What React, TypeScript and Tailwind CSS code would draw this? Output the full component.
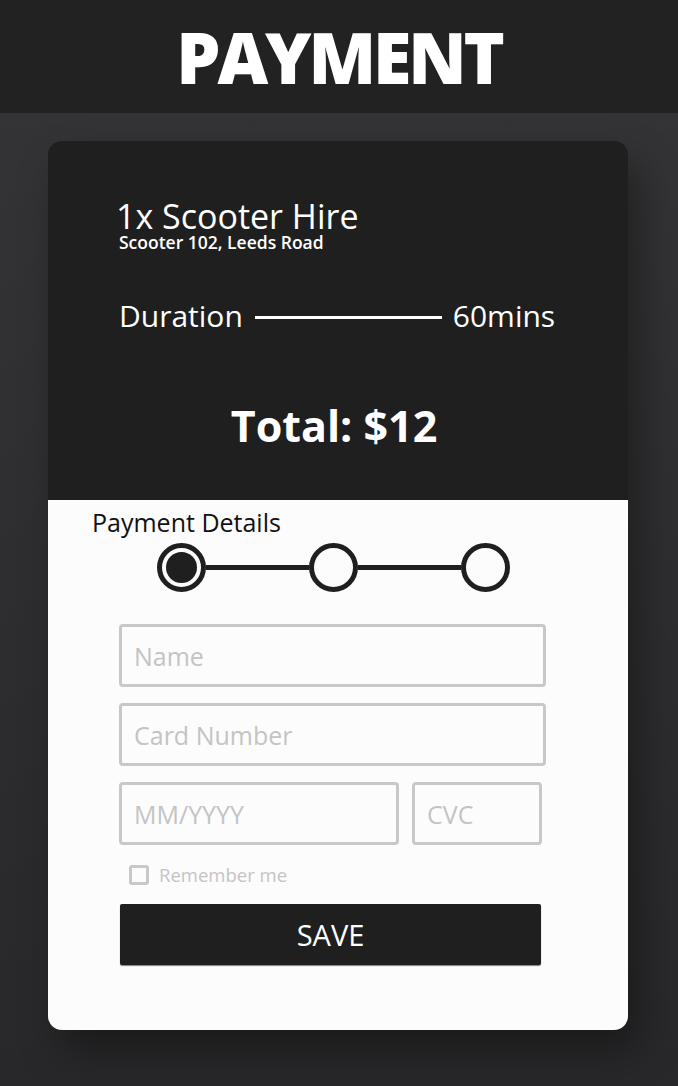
import { useState } from 'react';

const steps = [true, false, false];

export default function App() {
  const [remember, setRemember] = useState(false);

  return (
    <div className="min-h-[1086px] bg-linear-to-b from-[#353537] to-[#28282a] font-['Open_Sans',sans-serif] pb-[56px]">
      <header className="h-[113px] bg-[#222222] flex items-center justify-center">
        <h1 className="text-white text-[70px] font-extrabold leading-none tracking-[-0.045em]">PAYMENT</h1>
      </header>

      <div className="mt-[28px] ml-[48px] w-[580px] rounded-[14px] overflow-hidden shadow-[12px_22px_40px_rgba(0,0,0,0.35)]">
        {/* order summary */}
        <section className="h-[359px] bg-[#1f1f1f] text-white pt-[60px]">
          <div className="pl-[68px]">
            <h2 className="text-[34px] leading-[31px]">1x Scooter Hire</h2>
            <p className="text-[17.5px] leading-[18px] font-semibold pl-[3px] mt-[1px]">Scooter 102, Leeds Road</p>
          </div>

          <div className="mt-[47px] pl-[71px] flex items-center h-[36px]">
            <span className="text-[30px] leading-[36px]">Duration</span>
            <span className="ml-[12px] mr-[11px] mt-[3px] w-[187px] h-[3px] bg-white" />
            <span className="text-[30px] leading-[36px]">60mins</span>
          </div>

          <p className="mt-[67px] text-center pr-[8px] text-[43px] leading-[50px] font-bold">Total: $12</p>
        </section>

        {/* payment form */}
        <section className="bg-[#fcfcfc] pt-[7px] pb-[65px]">
          <h3 className="pl-[44px] text-[25px] leading-[30px] text-[#111111]">Payment Details</h3>

          <div className="mt-[6px] pl-[109px] flex items-center">
            {steps.map((active, i) => (
              <div key={i} className="flex items-center">
                {i > 0 && <span className="w-[103px] h-[5px] bg-[#1f1f1f]" />}
                <span className="w-[49px] h-[49px] rounded-full border-[5px] border-[#1f1f1f] flex items-center justify-center">
                  {active && <span className="w-[31px] h-[31px] rounded-full bg-[#1f1f1f]" />}
                </span>
              </div>
            ))}
          </div>

          <div className="mt-[32px] pl-[71px] flex flex-col gap-[16px]">
            <input
              placeholder="Name"
              className="w-[427px] h-[63px] border-[3px] border-[#c8c8c8] rounded-[4px] bg-transparent px-[12px] text-[25px] text-[#333] placeholder:text-[#c4c4c4] outline-none"
            />
            <input
              placeholder="Card Number"
              className="w-[427px] h-[63px] border-[3px] border-[#c8c8c8] rounded-[4px] bg-transparent px-[12px] text-[25px] text-[#333] placeholder:text-[#c4c4c4] outline-none"
            />
            <div className="flex gap-[13px]">
              <input
                placeholder="MM/YYYY"
                className="w-[280px] h-[63px] border-[3px] border-[#c8c8c8] rounded-[4px] bg-transparent px-[12px] text-[25px] text-[#333] placeholder:text-[#c4c4c4] outline-none"
              />
              <input
                placeholder="CVC"
                className="w-[130px] h-[63px] border-[3px] border-[#c8c8c8] rounded-[4px] bg-transparent px-[12px] text-[25px] text-[#333] placeholder:text-[#c4c4c4] outline-none"
              />
            </div>
          </div>

          <label className="mt-[20px] ml-[81px] flex items-center gap-[10px] h-[20px] cursor-pointer w-fit">
            <span
              onClick={() => setRemember(!remember)}
              className={`w-[20px] h-[20px] rounded-[3px] border-[3px] border-[#c8c8c8] ${remember ? 'bg-[#c8c8c8]' : ''}`}
            />
            <span className="text-[18.5px] leading-[20px] text-[#c4c4c4]">Remember me</span>
          </label>

          <button className="mt-[19px] ml-[72px] w-[421px] h-[61px] bg-[#1f1f1f] text-white rounded-[2px] text-[29px] shadow-[0_1px_1px_rgba(0,0,0,0.5)]">
            SAVE
          </button>
        </section>
      </div>
    </div>
  );
}
